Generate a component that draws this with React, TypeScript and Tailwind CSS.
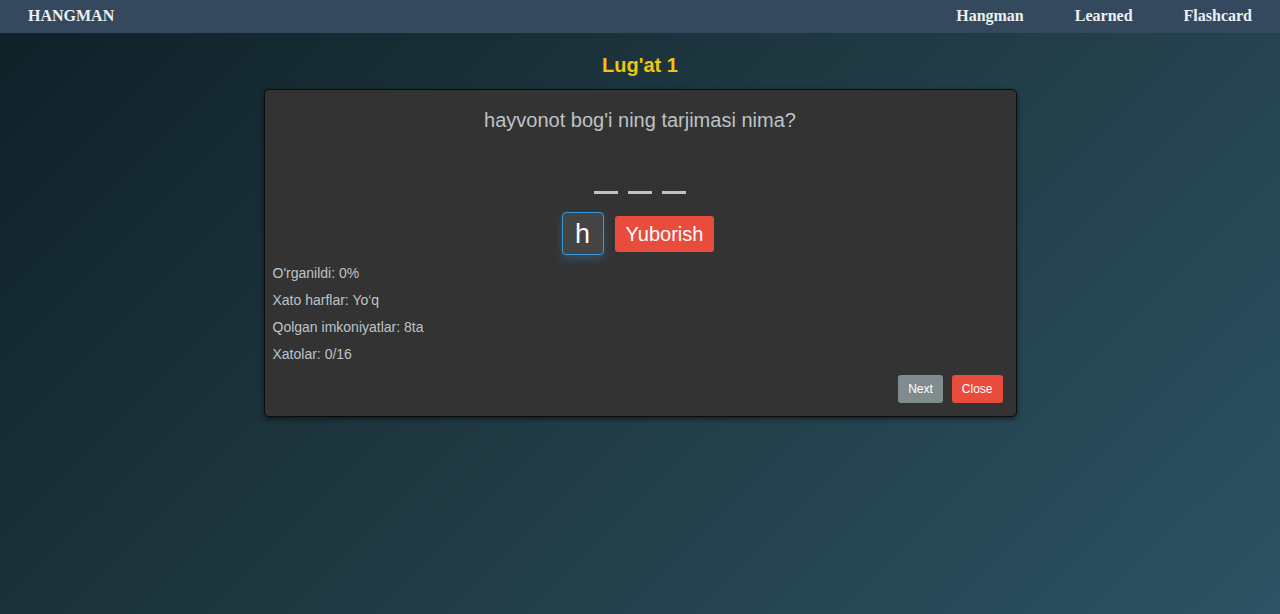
import { useState } from "react";

const links = ["Hangman", "Learned", "Flashcard"];
const stats = [
  "O'rganildi: 0%",
  "Xato harflar: Yo‘q",
  "Qolgan imkoniyatlar: 8ta",
  "Xatolar: 0/16",
];

function Navbar() {
  return (
    <header className="flex items-center justify-between bg-[#34495e] px-7 pt-1 pb-[5px] font-['Liberation_Serif',serif] text-base font-bold text-[#ecf0f1]">
      <a href="#home">HANGMAN</a>
      <nav className="flex gap-[51px]">
        {links.map((link) => (
          <a key={link} href={`#${link.toLowerCase()}`}>
            {link}
          </a>
        ))}
      </nav>
    </header>
  );
}

export default function App() {
  const [letter, setLetter] = useState("h");

  return (
    <div className="min-h-screen bg-[linear-gradient(135deg,#0f2027,#203a43,#2c5364)] font-['Liberation_Sans',Arial,sans-serif]">
      <Navbar />
      <main className="mx-auto w-full max-w-[753px] pt-5">
        <h1 className="text-center text-[20px] leading-6 font-bold text-[#f1c40f]">Lug'at 1</h1>
        <section className="mt-3 rounded-[5px] border border-[#0c0c0c] bg-[#333333] px-2 pt-[18px] pb-[13px] text-[#bdc3c7] shadow-[0_2px_5px_rgba(0,0,0,0.5)]">
          <h2 className="text-center text-[20px] leading-6">hayvonot bog'i ning tarjimasi nima?</h2>
          <div className="mt-[59px] flex justify-center gap-[10px]">
            {[0, 1, 2].map((slot) => (
              <span key={slot} className="h-[3px] w-6 bg-[#bdc3c7]" />
            ))}
          </div>
          <form
            className="mt-[18px] flex items-center justify-center gap-[11px] pr-1"
            onSubmit={(event) => event.preventDefault()}
          >
            <input
              aria-label="Harf"
              maxLength={1}
              value={letter}
              onChange={(event) => setLetter(event.target.value)}
              className="h-[43px] w-[42px] rounded-[4px] border border-[#3498db] bg-[#444444] pt-px text-center text-[27px] text-white shadow-[0_4px_8px_rgba(52,152,219,0.3)] outline-none"
            />
            <button type="submit" className="h-9 rounded-[3px] bg-[#e74c3c] px-[11px] text-[20px] text-white">
              Yuborish
            </button>
          </form>
          <div className="mt-[9px] flex flex-col gap-[9px] text-sm leading-[18px]">
            {stats.map((stat) => (
              <p key={stat}>{stat}</p>
            ))}
          </div>
          <div className="mt-3 flex justify-end gap-[9px] pr-[5px] text-[12px] text-white">
            <button type="button" className="h-7 rounded-[3px] bg-[#7f8c8d] px-[10px] pb-px">
              Next
            </button>
            <button type="button" className="h-7 rounded-[3px] bg-[#e74c3c] px-[10px] pb-px">
              Close
            </button>
          </div>
        </section>
      </main>
    </div>
  );
}
